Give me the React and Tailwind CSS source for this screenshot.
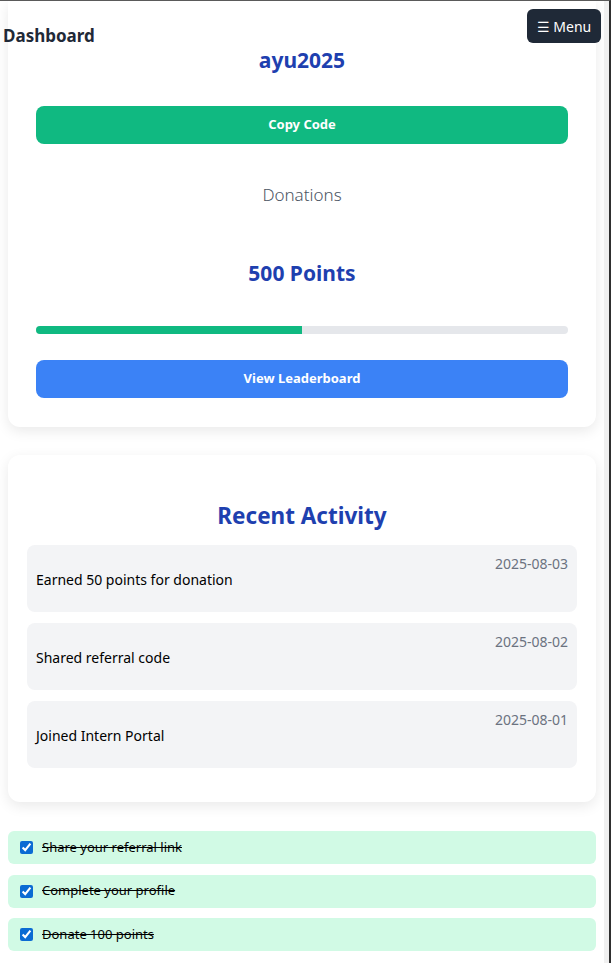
import { useState } from "react";

const activities = [
  { text: "Earned 50 points for donation", date: "2025-08-03" },
  { text: "Shared referral code", date: "2025-08-02" },
  { text: "Joined Intern Portal", date: "2025-08-01" },
];

const tasks = [
  "Share your referral link",
  "Complete your profile",
  "Donate 100 points",
];

export default function App() {
  const [done, setDone] = useState([true, true, true]);
  const points = 500;
  const progress = 50;

  return (
    <div
      className="relative h-[963px] overflow-hidden bg-white border-t border-t-[#5a5a5a] border-r-2 border-r-[#2f2f2f] flex"
      style={{ fontFamily: '"Noto Sans", "Open Sans", sans-serif' }}
    >
      <main className="w-[604px] shrink-0 px-2">
        {/* Referral card */}
        <section className="rounded-b-xl bg-white px-7 pt-[45px] pb-[29px] shadow-[0_4px_14px_rgba(0,0,0,0.09)]">
          <h2 className="text-center text-[21px] font-bold leading-[28px] text-[#1e40af]">ayu2025</h2>
          <button className="mt-8 h-[38px] w-full rounded-lg bg-[#10b981] text-[13px] font-bold text-white">
            Copy Code
          </button>
          <p className="mt-[39px] text-center text-[17px] font-light leading-6 text-[#4b5563]">Donations</p>
          <h3 className="mt-[52px] text-center text-[21px] font-bold leading-[28px] text-[#1e40af]">
            {points} Points
          </h3>
          <div className="mt-[39px] h-2 w-full overflow-hidden rounded-full bg-[#e5e7eb]">
            <div className="h-full bg-[#10b981]" style={{ width: `${progress}%` }} />
          </div>
          <button className="mt-[26px] h-[38px] w-full rounded-lg bg-[#3b82f6] text-[13px] font-bold text-white">
            View Leaderboard
          </button>
        </section>

        {/* Recent activity */}
        <section className="mt-7 rounded-xl bg-white px-[19px] pt-[45px] pb-[34px] shadow-[0_4px_14px_rgba(0,0,0,0.09)]">
          <h2 className="text-center text-[22.5px] font-bold leading-8 text-[#1e40af]">Recent Activity</h2>
          <ul className="mt-[13px] flex flex-col gap-[11px]">
            {activities.map((a) => (
              <li key={a.date} className="flex h-[67px] items-start justify-between rounded-lg bg-[#f3f4f6] p-[9px]">
                <span className="mt-[15px] text-[14px] leading-[22px] text-black">{a.text}</span>
                <span className="text-[14px] leading-5 text-[#6b7280]">{a.date}</span>
              </li>
            ))}
          </ul>
        </section>

        {/* Tasks */}
        <ul className="mt-[29px] flex flex-col gap-[10.5px]">
          {tasks.map((t, i) => (
            <li key={t} className="flex h-[33px] items-center gap-[9px] rounded-md bg-[#d1fae5] pl-3">
              <input
                type="checkbox"
                checked={done[i]}
                onChange={() => setDone(done.map((d, j) => (j === i ? !d : d)))}
                className="m-0 h-[13px] w-[13px] accent-[#0b6bd3]"
              />
              <span className={`text-[13px] text-black ${done[i] ? "line-through" : ""}`}>{t}</span>
            </li>
          ))}
        </ul>
      </main>
      <div className="w-[5px] shrink-0 bg-[#f0f0f0]" />

      {/* Fixed header overlays */}
      <h1 className="absolute left-[3px] top-[23px] text-[17px] font-bold leading-6 text-[#1f2937]">Dashboard</h1>
      <button className="absolute right-[8px] top-[8px] flex h-[34px] w-[74px] items-center justify-center rounded-md bg-[#1f2937] text-[14px] text-white">
        ☰ Menu
      </button>
    </div>
  );
}
